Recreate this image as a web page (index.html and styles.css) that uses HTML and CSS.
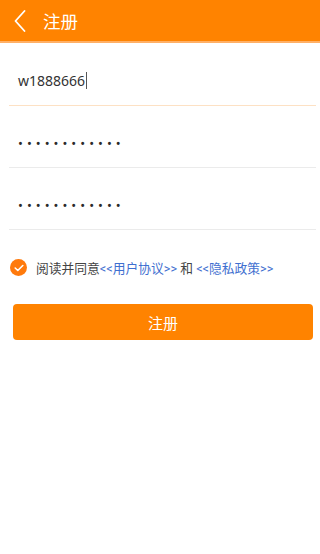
FILE: index.html
```html
<!DOCTYPE html>
<html lang="zh">
<head>
<meta charset="utf-8">
<link rel="stylesheet" href="styles.css">
</head>
<body>
<header class="bar">
  <svg class="back" width="12" height="22" viewBox="0 0 12 22"><path d="M10.5 1 L1.5 11 L10.5 21" fill="none" stroke="#fff" stroke-width="1.8" stroke-linecap="round" stroke-linejoin="round"/></svg>
  <span class="title">注册</span>
</header>
<div class="form">
  <div class="field active"><span class="val">w1888666</span><span class="caret"></span></div>
  <div class="field"><span class="dots">••••••••••••</span></div>
  <div class="field"><span class="dots">••••••••••••</span></div>
</div>
<div class="agree">
  <span class="check"><svg width="10" height="8" viewBox="0 0 10 8"><path d="M1.2 4 L3.8 6.5 L8.8 1.5" fill="none" stroke="#fff" stroke-width="1.6" stroke-linecap="round" stroke-linejoin="round"/></svg></span>
  <span class="txt">阅读并同意<span class="link">&lt;&lt;用户协议&gt;&gt;</span> 和 <span class="link">&lt;&lt;隐私政策&gt;&gt;</span></span>
</div>
<div class="btnwrap"><button class="btn">注册</button></div>
</body>
</html>
```
FILE: styles.css
```css
* { box-sizing: border-box; }
html, body { margin: 0; padding: 0; background: #fff; }
body { width: 320px; height: 554px; font-family: "Noto Sans", "Noto Sans CJK SC", sans-serif; color: #333; }
.bar { background: #ff8300; display: flex; align-items: center; padding-left: 14px; border-bottom: 2px solid #ffb066; height: 43px; }
.back { display: block; margin-right: 17px; }
.title { color: #fff; font-size: 17.5px; line-height: 20px; font-family: "Noto Sans CJK SC", sans-serif; }
.form { padding: 0 4px 0 9px; }
.field { height: 62px; border-bottom: 1px solid #ebebeb; display: flex; align-items: center; padding-left: 9px; padding-top: 15px; }
.field.active { border-bottom-color: #fde1c4; height: 63px; padding-top: 13px; }
.val { font-size: 14px; color: #333; }
.caret { width: 1px; height: 17px; background: #555; margin-left: 1px; }
.dots { font-family: Roboto, sans-serif; font-size: 14.5px; letter-spacing: 4px; color: #2a2a2a; }
.agree { display: flex; align-items: center; padding: 28px 0 0 10px; }
.check { width: 17px; height: 17px; border-radius: 50%; background: #ff7a0c; display: flex; align-items: center; justify-content: center; margin-right: 9px; }
.check svg { display: block; }
.txt { font-size: 12.75px; color: #444; font-family: Roboto, "Noto Sans CJK SC", sans-serif; }
.link { color: #3f6fd0; }
.btnwrap { padding: 27px 7px 0 13px; }
.btn { display: block; width: 100%; height: 36px; border: none; border-radius: 4px; background: #ff8300; color: #fff; font-family: "Noto Sans CJK SC", sans-serif; font-size: 15px; padding: 0; }
```
